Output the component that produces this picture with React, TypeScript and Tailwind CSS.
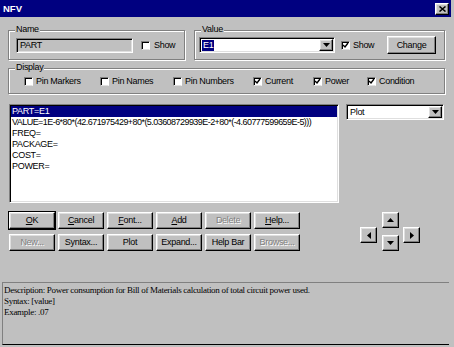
import React from "react";

// win95 bevels
const raised =
  "border border-t-white border-l-white border-r-black border-b-black shadow-[inset_-1px_-1px_0_#808080,inset_1px_1px_0_#dfdfdf]";
const sunken =
  "border border-t-[#808080] border-l-[#808080] border-r-white border-b-white shadow-[inset_1px_1px_0_#000,inset_-1px_-1px_0_#dfdfdf]";

function Check({ checked }: { checked?: boolean }) {
  return (
    <span
      className={`w-[9px] h-[9px] bg-white flex items-center justify-center shrink-0 border border-t-[#808080] border-l-[#808080] border-r-white border-b-[#dfdfdf] shadow-[inset_1px_1px_0_#000]`}
    >
      {checked && (
        <svg width="7" height="7" viewBox="0 0 7 7">
          <path d="M1 3 L3 5 L6 1" stroke="#000" strokeWidth="1.4" fill="none" />
        </svg>
      )}
    </span>
  );
}

function CheckLabel({ label, checked, className = "" }: { label: string; checked?: boolean; className?: string }) {
  return (
    <div className={`flex items-center gap-[3px] ${className}`}>
      <Check checked={checked} />
      <span className="leading-none">{label}</span>
    </div>
  );
}

function Group({ label, className = "", children }: { label: string; className?: string; children: React.ReactNode }) {
  return (
    <div
      className={`relative border border-[#808080] shadow-[inset_1px_1px_0_#fff,1px_1px_0_#fff] ${className}`}
    >
      <span className="absolute -top-[6px] left-[6px] px-[1px] bg-[#c0c0c0] leading-none">{label}</span>
      {children}
    </div>
  );
}

function DropButton() {
  return (
    <span className={`w-[14px] h-full flex items-center justify-center bg-[#c0c0c0] ${raised}`}>
      <svg width="7" height="4" viewBox="0 0 7 4">
        <path d="M0 0 H7 L3.5 4 Z" fill="#000" />
      </svg>
    </span>
  );
}

function Btn({
  label,
  mn,
  disabled,
  def,
}: {
  label: string;
  mn?: number;
  disabled?: boolean;
  def?: boolean;
}) {
  const text =
    mn === undefined ? (
      label
    ) : (
      <>
        {label.slice(0, mn)}
        <span className="underline">{label[mn]}</span>
        {label.slice(mn + 1)}
      </>
    );
  return (
    <div className={`w-[46px] h-[17px] ${def ? "outline outline-1 outline-black" : ""}`}>
      <div
        className={`w-full h-full flex items-center justify-center bg-[#c0c0c0] ${raised} ${
          disabled ? "text-[#808080] [text-shadow:1px_1px_0_#fff]" : "text-black"
        }`}
      >
        <span className="leading-none">{text}</span>
      </div>
    </div>
  );
}

function Arrow({ dir }: { dir: "up" | "down" | "left" | "right" }) {
  const d = {
    up: "M0 4 H7 L3.5 0 Z",
    down: "M0 0 H7 L3.5 4 Z",
    left: "M4 0 V7 L0 3.5 Z",
    right: "M0 0 V7 L4 3.5 Z",
  }[dir];
  const vert = dir === "up" || dir === "down";
  return (
    <div className={`w-[17px] h-[16px] flex items-center justify-center bg-[#c0c0c0] ${raised}`}>
      <svg width={vert ? 7 : 4} height={vert ? 4 : 7} viewBox={vert ? "0 0 7 4" : "0 0 4 7"}>
        <path d={d} fill="#000" />
      </svg>
    </div>
  );
}

export default function App() {
  const rows = [
    "PART=E1",
    "VALUE=1E-6*80*(42.671975429+80*(5.03608729939E-2+80*(-4.60777599659E-5)))",
    "FREQ=",
    "PACKAGE=",
    "COST=",
    "POWER=",
  ];

  return (
    <div className="w-[454px] h-[347px] bg-[#c0c0c0] flex flex-col overflow-hidden font-['Liberation_Sans',Arial,sans-serif] text-[9px] tracking-[-0.3px] text-black">
      {/* title bar */}
      <div className="h-[17px] mr-[3px] bg-[#000080] flex items-center justify-between pl-[3px] pr-[2px] shrink-0">
        <span className="text-white font-bold text-[9.5px] tracking-normal leading-none">NFV</span>
        <div className={`w-[14px] h-[12px] flex items-center justify-center bg-[#c0c0c0] ${raised}`}>
          <svg width="7" height="6" viewBox="0 0 7 6">
            <path d="M0.5 0.5 L6.5 5.5 M6.5 0.5 L0.5 5.5" stroke="#000" strokeWidth="1.5" />
          </svg>
        </div>
      </div>

      <div className="flex-1 flex flex-col pl-[8px] pr-[9px]">
        {/* name / value */}
        <div className="flex gap-[9px] mt-[13px]">
          <Group label="Name" className="w-[177px] h-[30px] flex items-center pl-[7px]">
            <div className={`w-[117px] h-[15px] bg-[#c0c0c0] flex items-center pl-[3px] ${sunken}`}>
              <span className="leading-none">PART</span>
            </div>
            <CheckLabel label="Show" className="ml-[8px] gap-[4px]" />
          </Group>
          <Group label="Value" className="flex-1 h-[30px] flex items-center pl-[4px] pr-[8px]">
            <div className={`w-[136px] h-[16px] bg-white flex items-center pl-[2px] pr-[1px] py-[1px] ${sunken}`}>
              <span className="bg-[#000080] text-white leading-none px-[1px] py-[1px]">E1</span>
              <span className="flex-1" />
              <DropButton />
            </div>
            <CheckLabel label="Show" checked className="ml-[6px] gap-[3px]" />
            <div className="flex-1" />
            <div className={`w-[49px] h-[18px] flex items-center justify-center bg-[#c0c0c0] ${raised}`}>
              <span className="leading-none">Change</span>
            </div>
          </Group>
        </div>

        {/* display */}
        <Group label="Display" className="mt-[8px] h-[26px] flex items-center pl-[15px]">
          <CheckLabel label="Pin Markers" className="w-[76px]" />
          <CheckLabel label="Pin Names" className="w-[73px]" />
          <CheckLabel label="Pin Numbers" className="w-[80px]" />
          <CheckLabel label="Current" checked className="w-[60px]" />
          <CheckLabel label="Power" checked className="w-[54px]" />
          <CheckLabel label="Condition" checked />
        </Group>

        {/* list + plot */}
        <div className="flex items-start mt-[10px] ml-[1px]">
          <div className={`w-[330px] h-[99px] bg-white p-[1px] ${sunken}`}>
            {rows.map((r, i) => (
              <div
                key={r}
                className={`h-[11px] leading-[11px] pl-[1px] whitespace-nowrap ${
                  i === 0 ? "bg-[#000080] text-white" : ""
                } ${i === 1 ? "tracking-[-0.55px]" : ""}`}
              >
                {r}
              </div>
            ))}
          </div>
          <div className={`ml-[7px] w-[98px] h-[16px] bg-white flex items-center pl-[3px] pr-[1px] py-[1px] ${sunken}`}>
            <span className="leading-none flex-1">Plot</span>
            <DropButton />
          </div>
        </div>

        {/* buttons */}
        <div className="flex mt-[9px] ml-[1px]">
          <div className="flex flex-col gap-[5px]">
            <div className="flex gap-[3px]">
              <Btn label="OK" mn={0} def />
              <Btn label="Cancel" mn={0} />
              <Btn label="Font..." mn={0} />
              <Btn label="Add" mn={0} />
              <Btn label="Delete" disabled />
              <Btn label="Help..." mn={0} />
            </div>
            <div className="flex gap-[3px]">
              <Btn label="New..." disabled />
              <Btn label="Syntax..." />
              <Btn label="Plot" />
              <Btn label="Expand..." />
              <Btn label="Help Bar" />
              <Btn label="Browse..." disabled />
            </div>
          </div>
          <div className="flex items-start ml-[60px]">
            <div className="mt-[15px]">
              <Arrow dir="left" />
            </div>
            <div className="flex flex-col gap-[7px] ml-[5px]">
              <Arrow dir="up" />
              <Arrow dir="down" />
            </div>
            <div className="mt-[15px] ml-[4px]">
              <Arrow dir="right" />
            </div>
          </div>
        </div>
      </div>

      {/* description */}
      <div className="h-[63px] ml-[2px] mr-[5px] mb-[2px] border-t border-l border-[#808080] border-b border-b-black shrink-0 pt-[2px] pl-[1px] font-['Liberation_Serif',serif] text-[9px] tracking-[-0.3px] leading-[11px]">
        <div>Description: Power consumption for Bill of Materials calculation of total circuit power used.</div>
        <div>Syntax: [value]</div>
        <div>Example: .07</div>
      </div>
    </div>
  );
}
